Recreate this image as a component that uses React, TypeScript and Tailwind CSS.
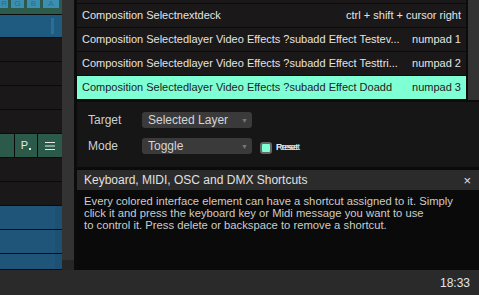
import React from "react";

const rows = [
  { name: "Composition Selectnextdeck", key: "ctrl + shift + cursor right", active: false },
  { name: "Composition Selectedlayer Video Effects ?subadd Effect Testev...", key: "numpad 1", active: false },
  { name: "Composition Selectedlayer Video Effects ?subadd Effect Testtri...", key: "numpad 2", active: false },
  { name: "Composition Selectedlayer Video Effects ?subadd Effect Doadd", key: "numpad 3", active: true },
];

function Dropdown({ value }: { value: string }) {
  return (
    <div className="flex items-center justify-between w-[110px] h-[16px] rounded-[3px] bg-[#3a3a3a] pl-[6px] pr-[4px]">
      <span className="text-[12px] text-[#d6d6d6] leading-none">{value}</span>
      <span className="text-[7px] text-[#777] leading-none">▼</span>
    </div>
  );
}

export default function App() {
  return (
    <div
      className="w-[479px] h-[295px] bg-[#0b0b0b] flex flex-col overflow-hidden"
      style={{ fontFamily: '"Liberation Sans", Arial, sans-serif' }}
    >
      <div className="flex h-[270px]">
        {/* Left column */}
        <div className="w-[62px] flex flex-col gap-px">
          <div className="h-[14px] bg-[#2c5a4c] flex flex-col">
            <div className="h-[8px] flex gap-[3px] text-[8px] leading-none text-[#2b6d8e]">
              <div className="w-[8px] bg-[#3d8fb2] flex items-end justify-end pr-px">R</div>
              <div className="w-[13px] bg-[#3d8fb2] flex items-end justify-center">G</div>
              <div className="w-[13px] bg-[#3d8fb2] flex items-end justify-center">B</div>
              <div className="w-[16px] bg-[#3d8fb2] flex items-end justify-center">A</div>
            </div>
          </div>
          <div className="h-[22px] bg-[#1f5a80] flex items-center justify-end pr-[8px]">
            <div className="w-[3px] h-[16px] bg-[#2e6e94]" />
          </div>
          <div className="h-[23px] bg-[#1a1818]" />
          <div className="h-[23px] bg-[#1a1818]" />
          <div className="h-[23px] bg-[#1a1818]" />
          <div className="h-[23px] bg-[#1a1818]" />
          <div className="h-[23px] flex gap-px">
            <div className="w-[14px] bg-[#2b5a4b]" />
            <div className="w-[22px] bg-[#2b5a4b] flex items-center justify-center text-[#e6e6e6] text-[11px]">
              <span>P</span>
              <span className="w-[2px] h-[2px] bg-[#e6e6e6] mt-[6px] ml-px" />
            </div>
            <div className="flex-1 bg-[#2b5a4b] flex items-center justify-center">
              <svg width="10" height="8" viewBox="0 0 10 8">
                <path d="M0 0.5h10M0 4h10M0 7.5h10" stroke="#e6e6e6" strokeWidth="1" />
              </svg>
            </div>
          </div>
          <div className="h-[23px] bg-[#1a1818]" />
          <div className="h-[23px] bg-[#1a1818]" />
          <div className="h-[23px] bg-[#1f5578] flex justify-end"><div className="w-[7px] bg-[#1d5173]" /></div>
          <div className="h-[23px] bg-[#1f5578] flex justify-end"><div className="w-[7px] bg-[#1d5173]" /></div>
          <div className="h-[15px] bg-[#1f5578] flex justify-end"><div className="w-[7px] bg-[#1d5173]" /></div>
        </div>

        {/* Left scrollbar */}
        <div className="w-[12px] flex flex-col">
          <div className="flex-1 bg-[#333333]" />
          <div className="h-[10px] bg-[#262626]" />
        </div>
        <div className="w-[3px] bg-[#0b0b0b]" />

        {/* Right column */}
        <div className="flex-1 flex flex-col">
          <div className="h-[100px] flex">
            <div className="w-[389px] flex flex-col gap-px">
              <div className="h-[3px] bg-[#1a1818]" />
              {rows.map((r, i) => (
                <div
                  key={i}
                  className={
                    "h-[23px] flex items-center justify-between px-[5px] text-[11px] whitespace-nowrap " +
                    (r.active ? "bg-[#7fffd4] text-[#222]" : "bg-[#1a1818] text-[#e4e4e4]")
                  }
                >
                  <span>{r.name}</span>
                  <span>{r.key}</span>
                </div>
              ))}
            </div>
            <div className="w-[2px]" />
            <div className="flex-1 bg-[#333333]" />
          </div>

          <div className="h-[2px]" />

          {/* Settings */}
          <div className="h-[65px] bg-[#161616] flex flex-col gap-[10px] pt-[10px] pl-[11px]">
            <div className="flex items-center h-[16px]">
              <span className="w-[54px] text-[12px] text-[#cfcfcf]">Target</span>
              <Dropdown value="Selected Layer" />
            </div>
            <div className="flex items-center h-[16px]">
              <span className="w-[54px] text-[12px] text-[#cfcfcf]">Mode</span>
              <Dropdown value="Toggle" />
              <div className="ml-[8px] w-[12px] h-[12px] rounded-[3px] border-2 border-[#666] bg-[#7fffd4] mt-[4px]" />
              <span className="relative ml-[4px] mt-[4px] text-[9px] text-[#eee] tracking-[-0.4px]">
                Preset
                <span className="absolute left-0 top-0">Reset</span>
              </span>
            </div>
          </div>

          <div className="h-[3px]" />

          {/* Shortcuts panel */}
          <div className="flex-1 flex flex-col">
            <div className="h-[20px] bg-[#2b2b2b] flex items-center justify-between pl-[7px] pr-[8px]">
              <span className="text-[12px] text-[#e0e0e0]">Keyboard, MIDI, OSC and DMX Shortcuts</span>
              <span className="text-[13px] text-[#e0e0e0] leading-none">×</span>
            </div>
            <div className="flex-1 bg-[#0a0a0a] pl-[7px] pt-[5px] text-[11.25px] leading-[12px] text-[#cccccc]">
              Every colored interface element can have a shortcut assigned to it. Simply
              <br />
              click it and press the keyboard key or Midi message you want to use
              <br />
              to control it. Press delete or backspace to remove a shortcut.
            </div>
          </div>
        </div>
      </div>

      {/* Bottom bar */}
      <div className="h-[25px] bg-[#2a2a2a] flex items-center justify-end pr-[9px]">
        <span className="text-[12px] text-[#e6e6e6]">18:33</span>
      </div>
    </div>
  );
}
